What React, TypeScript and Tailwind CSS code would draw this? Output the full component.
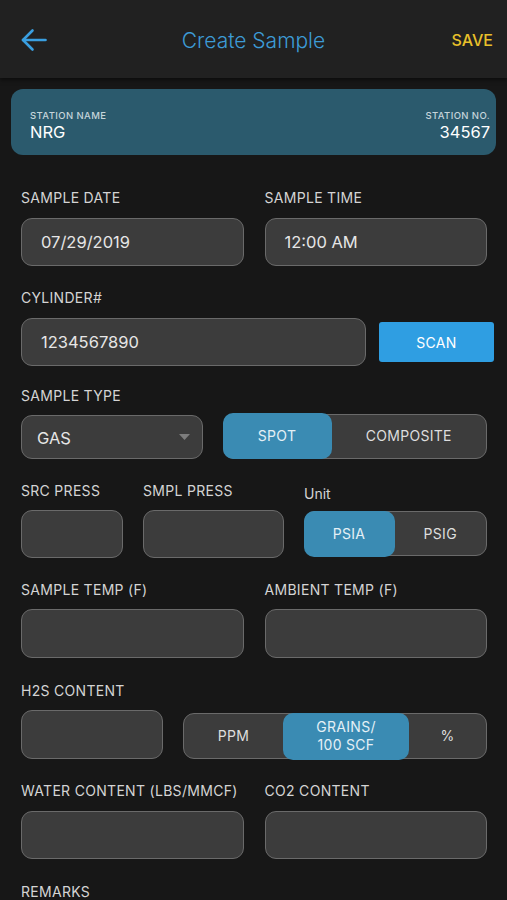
import React from 'react';

const font = { fontFamily: 'Inter, "Noto Sans", sans-serif' };

const Label: React.FC<{ children: React.ReactNode; className?: string }> = ({ children, className }) => (
  <div className={`h-5 text-[14px] leading-5 text-[#d4d4d4] tracking-[0.3px] ${className ?? 'font-normal'}`}>{children}</div>
);

const Field: React.FC<{ value?: string; className?: string }> = ({ value, className }) => (
  <div
    className={`h-12 rounded-[11px] border-[1.5px] border-[#6a6a6a] bg-[#3c3c3c] flex items-center px-[19px] text-[16.5px] text-[#e6e6e6] ${className ?? ''}`}
  >
    {value}
  </div>
);

type SegProps = { options: React.ReactNode[]; selected: number; widths: string[]; className?: string };

const Segmented: React.FC<SegProps> = ({ options, selected, widths, className }) => (
  <div className={`h-[45px] rounded-[11px] border-[1.5px] border-[#6a6a6a] bg-[#3c3c3c] flex ${className ?? ''}`}>
    {options.map((opt, i) => (
      <div
        key={i}
        className={`${widths[i]} flex items-center justify-center text-center text-[14px] leading-[18px] tracking-[0.3px] ${
          i === selected
            ? `bg-[#3a8bb3] rounded-[10px] text-[#e4f0f6] -my-[1.5px] ${i === 0 ? '-ml-[1.5px]' : ''}`
            : 'text-[#dedede]'
        }`}
      >
        {opt}
      </div>
    ))}
  </div>
);

const App: React.FC = () => {
  return (
    <div className="w-[507px] h-[900px] overflow-hidden bg-[#171717]" style={font}>
      {/* header */}
      <div className="h-[78px] bg-[#212121] flex items-center justify-between pl-[21px] pr-[14px] pt-[2px] shadow-[0_2px_4px_rgba(0,0,0,0.5)] relative">
        <svg width="26" height="24" viewBox="0 0 26 24" fill="none" stroke="#3a9fe0" strokeWidth="2.6" strokeLinecap="round" strokeLinejoin="round">
          <path d="M24.5 12H2" />
          <path d="M11.5 2.5L2 12l9.5 9.5" />
        </svg>
        <div className="absolute left-0 right-0 text-center text-[21px] font-light text-[#3d9bd6] pointer-events-none pt-[2px]">Create Sample</div>
        <div className="text-[16px] font-medium text-[#e8c02a]">SAVE</div>
      </div>

      {/* station card */}
      <div className="mx-[11px] mt-[11px] h-[66px] rounded-[12px] bg-[#2b5a6d] flex items-center justify-between pl-[19px] pr-[6px] pt-[7px]">
        <div>
          <div className="text-[9.5px] leading-[12px] font-medium text-[#c6d5db] tracking-[0.4px]">STATION NAME</div>
          <div className="text-[16.5px] leading-[20px] text-white">NRG</div>
        </div>
        <div className="text-right">
          <div className="text-[9.5px] leading-[12px] font-medium text-[#c6d5db] tracking-[0.4px]">STATION NO.</div>
          <div className="text-[16.5px] leading-[20px] text-white">34567</div>
        </div>
      </div>

      <div className="pl-[21px] pr-[20px] pt-[33px]">
        {/* date / time */}
        <div className="grid grid-cols-2 gap-x-[21px]">
          <div>
            <Label>SAMPLE DATE</Label>
            <Field value="07/29/2019" className="mt-[10px]" />
          </div>
          <div>
            <Label>SAMPLE TIME</Label>
            <Field value="12:00 AM" className="mt-[10px]" />
          </div>
        </div>

        {/* cylinder */}
        <div className="mt-[22px]">
          <Label>CYLINDER#</Label>
          <div className="mt-[10px] flex items-center gap-[13px] -mr-[7px]">
            <Field value="1234567890" className="flex-1" />
            <div className="w-[115px] h-10 rounded-[3px] bg-[#2f9ee2] flex items-center justify-center text-[14px] text-white tracking-[0.3px]">SCAN</div>
          </div>
        </div>

        {/* sample type */}
        <div className="mt-[20px]">
          <Label>SAMPLE TYPE</Label>
          <div className="mt-[7px] flex items-center gap-[20px]">
            <div className="w-[182px] h-[44px] mt-[2px] rounded-[11px] border-[1.5px] border-[#6a6a6a] bg-[#3c3c3c] flex items-center justify-between pl-[15px] pr-[12px] text-[16.5px] text-[#e6e6e6]">
              <span className="pt-[3px]">GAS</span>
              <svg width="11" height="6" viewBox="0 0 11 6">
                <path d="M0 0h11L5.5 6z" fill="#7d7d7d" />
              </svg>
            </div>
            <Segmented className="flex-1" options={['SPOT', 'COMPOSITE']} selected={0} widths={['w-[109px]', 'flex-1']} />
          </div>
        </div>

        {/* pressures */}
        <div className="mt-[22px] flex gap-[20px]">
          <div className="w-[102px]">
            <Label>SRC PRESS</Label>
            <Field className="mt-[9px]" />
          </div>
          <div className="w-[141px]">
            <Label>SMPL PRESS</Label>
            <Field className="mt-[9px]" />
          </div>
          <div className="flex-1">
            <Label className="pt-[3px] tracking-normal">Unit</Label>
            <Segmented className="mt-[10px]" options={['PSIA', 'PSIG']} selected={0} widths={['w-[91px]', 'flex-1']} />
          </div>
        </div>

        {/* temps */}
        <div className="mt-[22px] grid grid-cols-2 gap-x-[21px]">
          <div>
            <Label>SAMPLE TEMP (F)</Label>
            <Field className="mt-[9px] h-[49px]" />
          </div>
          <div>
            <Label>AMBIENT TEMP (F)</Label>
            <Field className="mt-[9px] h-[49px]" />
          </div>
        </div>

        {/* h2s */}
        <div className="mt-[23px]">
          <Label>H2S CONTENT</Label>
          <div className="mt-[9px] flex items-end gap-[20px]">
            <Field className="w-[142px] h-[49px]" />
            <Segmented
              className="flex-1 h-[46px]"
              options={['PPM', <>GRAINS/<br />100 SCF</>, '%']}
              selected={1}
              widths={['w-[99px]', 'w-[126px]', 'flex-1']}
            />
          </div>
        </div>

        {/* water / co2 */}
        <div className="mt-[22px] grid grid-cols-2 gap-x-[21px]">
          <div>
            <Label>WATER CONTENT (LBS/MMCF)</Label>
            <Field className="mt-[10px]" />
          </div>
          <div>
            <Label>CO2 CONTENT</Label>
            <Field className="mt-[10px]" />
          </div>
        </div>

        <div className="mt-[23px]">
          <Label>REMARKS</Label>
        </div>
      </div>
    </div>
  );
};

export default App;
